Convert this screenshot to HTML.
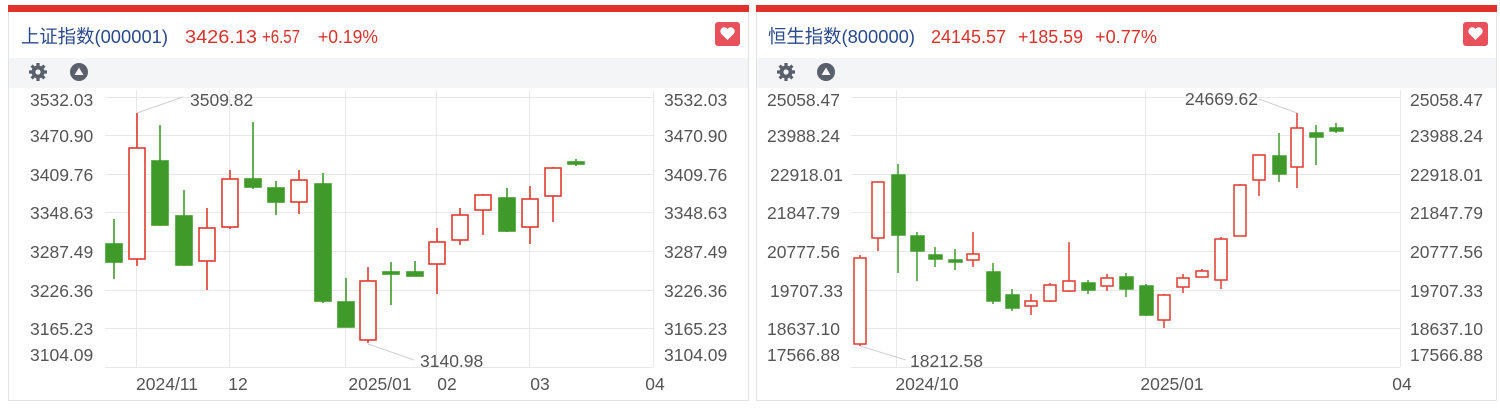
<!DOCTYPE html>
<html><head><meta charset="utf-8"><style>
body{margin:0;background:#fff;width:1500px;height:408px;overflow:hidden;font-family:"Liberation Sans","Noto Sans CJK SC",sans-serif}
svg text{font-family:"Liberation Sans","Noto Sans CJK SC",sans-serif}
</style></head><body>
<svg width="1500" height="408" viewBox="0 0 1500 408" xmlns="http://www.w3.org/2000/svg">
<rect x="8.5" y="5.5" width="740" height="395" fill="#fff" stroke="#e2e2e2"/>
<rect x="756.5" y="5.5" width="740" height="395" fill="#fff" stroke="#e2e2e2"/>
<rect x="8" y="5" width="741" height="7" fill="#e0312b"/>
<rect x="756" y="5" width="741" height="7" fill="#e0312b"/>
<rect x="9" y="58" width="739" height="30" fill="#f3f5f6"/>
<rect x="757" y="58" width="739" height="30" fill="#f3f5f6"/>

<text x="21" y="43" font-size="18.5" fill="#2b4a8c" textLength="147" lengthAdjust="spacingAndGlyphs">上证指数(000001)</text>
<g font-size="18.5" fill="#d8332b">
<text x="185" y="43" textLength="72" lengthAdjust="spacingAndGlyphs">3426.13</text>
<text x="262" y="43" textLength="38" lengthAdjust="spacingAndGlyphs">+6.57</text>
<text x="318" y="43" textLength="60" lengthAdjust="spacingAndGlyphs">+0.19%</text>
</g>
<text x="768" y="43" font-size="18.5" fill="#2b4a8c" textLength="147" lengthAdjust="spacingAndGlyphs">恒生指数(800000)</text>
<g font-size="18.5" fill="#d8332b">
<text x="931" y="43" textLength="75" lengthAdjust="spacingAndGlyphs">24145.57</text>
<text x="1018" y="43" textLength="65" lengthAdjust="spacingAndGlyphs">+185.59</text>
<text x="1095" y="43" textLength="62" lengthAdjust="spacingAndGlyphs">+0.77%</text>
</g>

<g>
<rect x="715" y="22" width="25" height="24" rx="3" fill="#e8505b"/>
<path d="M727.5 40 L721 33.5 A3.6 3.6 0 0 1 727.5 29 A3.6 3.6 0 0 1 734 33.5 Z" fill="#fff"/>
<rect x="1463" y="22" width="25" height="24" rx="3" fill="#e8505b"/>
<path d="M1475.5 40 L1469 33.5 A3.6 3.6 0 0 1 1475.5 29 A3.6 3.6 0 0 1 1482 33.5 Z" fill="#fff"/>
</g>

<g fill="#59606b">
<g transform="translate(38,72)"><circle r="6.5"/><g stroke="#59606b" stroke-width="3.2"><line x1="0" y1="-9" x2="0" y2="9"/><line x1="-9" y1="0" x2="9" y2="0"/><line x1="-6.4" y1="-6.4" x2="6.4" y2="6.4"/><line x1="-6.4" y1="6.4" x2="6.4" y2="-6.4"/></g><circle r="2.6" fill="#f3f5f6"/></g>
<circle cx="79" cy="72" r="9"/><path d="M79 67.5 L83.5 75 L74.5 75 Z" fill="#f3f5f6"/>
<g transform="translate(786,72)"><circle r="6.5"/><g stroke="#59606b" stroke-width="3.2"><line x1="0" y1="-9" x2="0" y2="9"/><line x1="-9" y1="0" x2="9" y2="0"/><line x1="-6.4" y1="-6.4" x2="6.4" y2="6.4"/><line x1="-6.4" y1="6.4" x2="6.4" y2="-6.4"/></g><circle r="2.6" fill="#f3f5f6"/></g>
<circle cx="826" cy="72" r="9"/><path d="M826 67.5 L830.5 75 L821.5 75 Z" fill="#f3f5f6"/>
</g>

<g stroke="#e8e8e8" stroke-width="1">
<line x1="105" y1="97.5" x2="653" y2="97.5"/><line x1="105" y1="135.5" x2="653" y2="135.5"/><line x1="105" y1="174.5" x2="653" y2="174.5"/><line x1="105" y1="212.5" x2="653" y2="212.5"/><line x1="105" y1="251.5" x2="653" y2="251.5"/><line x1="105" y1="290.5" x2="653" y2="290.5"/><line x1="105" y1="328.5" x2="653" y2="328.5"/><line x1="105" y1="367.5" x2="653" y2="367.5"/>
<line x1="136.5" y1="90" x2="136.5" y2="367"/><line x1="229.5" y1="90" x2="229.5" y2="367"/><line x1="345.5" y1="90" x2="345.5" y2="367"/><line x1="436.5" y1="90" x2="436.5" y2="367"/><line x1="529.5" y1="90" x2="529.5" y2="367"/><line x1="653.5" y1="90" x2="653.5" y2="367"/>
<line x1="851" y1="97.5" x2="1400" y2="97.5"/><line x1="851" y1="135.5" x2="1400" y2="135.5"/><line x1="851" y1="174.5" x2="1400" y2="174.5"/><line x1="851" y1="212.5" x2="1400" y2="212.5"/><line x1="851" y1="251.5" x2="1400" y2="251.5"/><line x1="851" y1="290.5" x2="1400" y2="290.5"/><line x1="851" y1="328.5" x2="1400" y2="328.5"/><line x1="851" y1="367.5" x2="1400" y2="367.5"/>
<line x1="896.5" y1="90" x2="896.5" y2="367"/><line x1="1145.5" y1="90" x2="1145.5" y2="367"/><line x1="1400.5" y1="90" x2="1400.5" y2="367"/>
</g>

<g font-size="17.5" fill="#555">
<text x="30" y="106">3532.03</text><text x="30" y="142">3470.90</text><text x="30" y="181">3409.76</text><text x="30" y="219">3348.63</text><text x="30" y="258">3287.49</text><text x="30" y="297">3226.36</text><text x="30" y="335">3165.23</text><text x="30" y="361">3104.09</text>
<text x="664" y="106">3532.03</text><text x="664" y="142">3470.90</text><text x="664" y="181">3409.76</text><text x="664" y="219">3348.63</text><text x="664" y="258">3287.49</text><text x="664" y="297">3226.36</text><text x="664" y="335">3165.23</text><text x="664" y="361">3104.09</text>
<g text-anchor="middle"><text x="167" y="390">2024/11</text><text x="238" y="390">12</text><text x="380" y="390">2025/01</text><text x="447" y="390">02</text><text x="540" y="390">03</text><text x="655" y="390">04</text></g>
<text x="767" y="106">25058.47</text><text x="767" y="142">23988.24</text><text x="770" y="181">22918.01</text><text x="767" y="219">21847.79</text><text x="767" y="258">20777.56</text><text x="770" y="297">19707.33</text><text x="767" y="335">18637.10</text><text x="767" y="361">17566.88</text>
<text x="1410" y="106">25058.47</text><text x="1410" y="142">23988.24</text><text x="1410" y="181">22918.01</text><text x="1410" y="219">21847.79</text><text x="1410" y="258">20777.56</text><text x="1410" y="297">19707.33</text><text x="1410" y="335">18637.10</text><text x="1410" y="361">17566.88</text>
<g text-anchor="middle"><text x="927" y="390">2024/10</text><text x="1172" y="390">2025/01</text><text x="1402" y="390">04</text></g>
<text x="190" y="106">3509.82</text><text x="420" y="367">3140.98</text>
<text x="1185" y="105">24669.62</text><text x="910" y="367">18212.58</text>
</g>
<g stroke="#cfcfcf" stroke-width="1" fill="none">
<polyline points="137,113 183,97"/><polyline points="368,344 414,360"/>
<polyline points="1259,99 1297,113"/><polyline points="860,346 906,360"/>
</g>

<g stroke-width="1.6">
<g stroke="#3f9a2a" fill="#3f9a2a">
<line x1="114" y1="219" x2="114" y2="279"/><rect x="106" y="244" width="16" height="18"/>
<line x1="160" y1="125" x2="160" y2="226"/><rect x="152" y="161" width="16" height="64"/>
<line x1="184" y1="190" x2="184" y2="266"/><rect x="176" y="216" width="16" height="49"/>
<line x1="253" y1="122" x2="253" y2="189"/><rect x="245" y="179" width="16" height="8"/>
<line x1="276" y1="181" x2="276" y2="215"/><rect x="268" y="188" width="16" height="14"/>
<line x1="323" y1="173" x2="323" y2="303"/><rect x="315" y="184" width="16" height="117"/>
<line x1="346" y1="278" x2="346" y2="327"/><rect x="338" y="302" width="16" height="25"/>
<line x1="391" y1="262" x2="391" y2="305"/><rect x="383" y="272" width="16" height="2"/>
<line x1="415" y1="261" x2="415" y2="276"/><rect x="407" y="272" width="16" height="4"/>
<line x1="507" y1="188" x2="507" y2="232"/><rect x="499" y="198" width="16" height="33"/>
<line x1="576" y1="159" x2="576" y2="166"/><rect x="568" y="162" width="16" height="2"/>
</g>
<g stroke="#e03a2f" fill="#fff">
<line x1="137" y1="113" x2="137" y2="266"/><rect x="129" y="148" width="16" height="111"/>
<line x1="207" y1="208" x2="207" y2="290"/><rect x="199" y="228" width="16" height="33"/>
<line x1="230" y1="170" x2="230" y2="229"/><rect x="222" y="179" width="16" height="48"/>
<line x1="299" y1="170" x2="299" y2="214"/><rect x="291" y="180" width="16" height="22"/>
<line x1="368" y1="267" x2="368" y2="343"/><rect x="360" y="281" width="16" height="59"/>
<line x1="437" y1="228" x2="437" y2="294"/><rect x="429" y="242" width="16" height="22"/>
<line x1="460" y1="208" x2="460" y2="245"/><rect x="452" y="215" width="16" height="25"/>
<line x1="483" y1="194" x2="483" y2="235"/><rect x="475" y="195" width="16" height="15"/>
<line x1="530" y1="186" x2="530" y2="244"/><rect x="522" y="199" width="16" height="28"/>
<line x1="553" y1="167" x2="553" y2="222"/><rect x="545" y="168" width="16" height="28"/>
</g>
</g>

<g stroke-width="1.5">
<g stroke="#3f9a2a" fill="#3f9a2a">
<line x1="898" y1="164" x2="898" y2="273"/><rect x="892" y="175" width="13" height="60"/>
<line x1="917" y1="232" x2="917" y2="281"/><rect x="911" y="236" width="13" height="15"/>
<line x1="935" y1="247" x2="935" y2="267"/><rect x="929" y="255" width="13" height="4"/>
<line x1="955" y1="249" x2="955" y2="270"/><rect x="949" y="260" width="13" height="2"/>
<line x1="993" y1="263" x2="993" y2="304"/><rect x="987" y="272" width="13" height="29"/>
<line x1="1012" y1="289" x2="1012" y2="311"/><rect x="1006" y="295" width="13" height="13"/>
<line x1="1088" y1="280" x2="1088" y2="294"/><rect x="1082" y="283" width="13" height="7"/>
<line x1="1126" y1="273" x2="1126" y2="297"/><rect x="1120" y="277" width="13" height="12"/>
<line x1="1146" y1="284" x2="1146" y2="316"/><rect x="1140" y="286" width="13" height="29"/>
<line x1="1279" y1="133" x2="1279" y2="182"/><rect x="1273" y="156" width="13" height="18"/>
<line x1="1316" y1="125" x2="1316" y2="165"/><rect x="1310" y="133" width="13" height="4"/>
<line x1="1336" y1="123" x2="1336" y2="133"/><rect x="1330" y="128" width="13" height="3"/>
</g>
<g stroke="#e03a2f" fill="#fff">
<line x1="860" y1="255" x2="860" y2="346"/><rect x="854" y="258" width="12" height="86"/>
<line x1="878" y1="182" x2="878" y2="251"/><rect x="872" y="182" width="12" height="56"/>
<line x1="973" y1="232" x2="973" y2="267"/><rect x="967" y="254" width="12" height="6"/>
<line x1="1031" y1="294" x2="1031" y2="315"/><rect x="1025" y="301" width="12" height="5"/>
<line x1="1050" y1="283" x2="1050" y2="302"/><rect x="1044" y="285" width="12" height="16"/>
<line x1="1069" y1="242" x2="1069" y2="292"/><rect x="1063" y="281" width="12" height="10"/>
<line x1="1107" y1="274" x2="1107" y2="291"/><rect x="1101" y="278" width="12" height="8"/>
<line x1="1164" y1="294" x2="1164" y2="328"/><rect x="1158" y="295" width="12" height="25"/>
<line x1="1183" y1="274" x2="1183" y2="293"/><rect x="1177" y="278" width="12" height="9"/>
<line x1="1202" y1="269" x2="1202" y2="277"/><rect x="1196" y="271" width="12" height="6"/>
<line x1="1221" y1="237" x2="1221" y2="289"/><rect x="1215" y="239" width="12" height="41"/>
<line x1="1240" y1="184" x2="1240" y2="236"/><rect x="1234" y="185" width="12" height="51"/>
<line x1="1259" y1="155" x2="1259" y2="196"/><rect x="1253" y="155" width="12" height="25"/>
<line x1="1297" y1="113" x2="1297" y2="188"/><rect x="1291" y="128" width="12" height="39"/>
</g>
</g>
</svg>
</body></html>
